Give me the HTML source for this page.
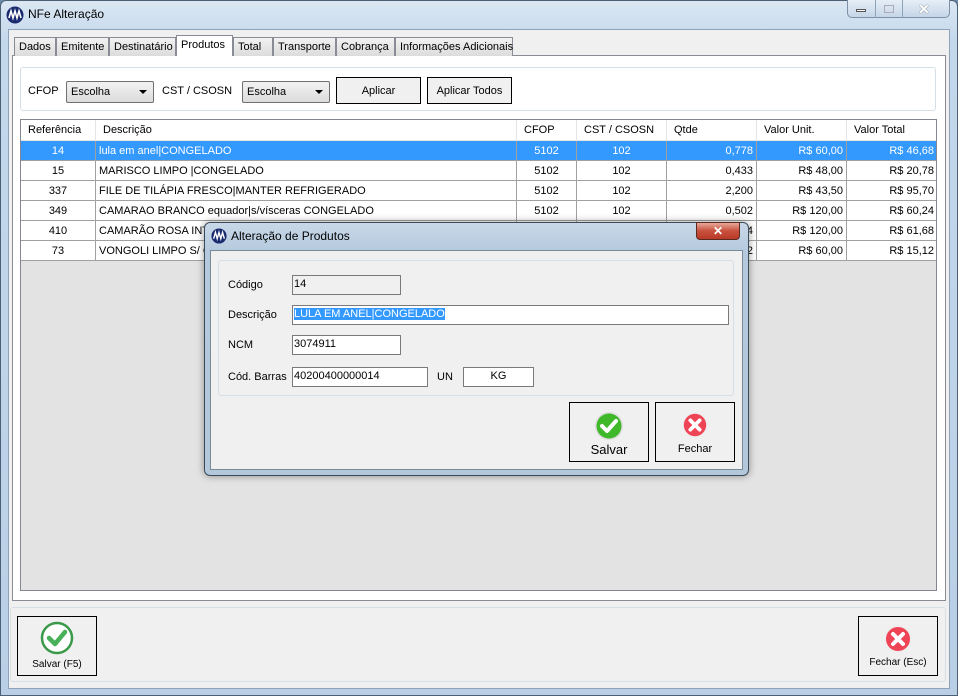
<!DOCTYPE html>
<html><head><meta charset="utf-8"><style>
*{box-sizing:border-box;margin:0;padding:0}
body{width:958px;height:696px;overflow:hidden;background:#6d8bad;font-family:"Liberation Sans",sans-serif;font-size:11px;color:#000;position:relative}
.a{position:absolute}
.frame{left:0;top:0;width:958px;height:696px;background:linear-gradient(#dbe7f3,#c4d8ec 40px,#b9cfe5);border:1px solid #4d5f73;border-radius:6px 6px 0 0}
.client{left:8px;top:29px;width:942px;height:660px;background:#f0f0f0;border:1px solid #8ea3b9}
.tab{top:37px;height:19px;border:1px solid #898c95;border-bottom:none;background:linear-gradient(#f2f2f2,#dcdcdc);padding:3px 4px 0;white-space:nowrap}
.tab.sel{top:35px;height:21px;background:#fff;z-index:2;padding-top:3px}
.panel{left:12px;top:55px;width:934px;height:546px;border:1px solid #898c95;background:#fff}
.grp{border:1px solid #d5dfe5;border-radius:3px;background:#f0f0f0}
.combo{height:22px;border:1px solid #707070;background:linear-gradient(#f2f2f2,#dcdcdc);border-radius:2px;padding:4px 4px;font-size:11px}
.combo:after{content:"";position:absolute;right:6px;top:8px;border:4px solid transparent;border-top:4px solid #000}
.btn{border:1px solid #000;background:#f0f0f0;text-align:center}
.grid{left:20px;top:119px;width:917px;height:472px;background:#e3e3e3;border:1px solid #828790;overflow:hidden}
table{border-collapse:collapse;position:absolute;left:-1px;top:-1px;table-layout:fixed}
td,th{height:20px;border:1px solid #a0a0a0;font-weight:normal;padding:0 3px;white-space:nowrap;overflow:hidden;font-size:11px}
th{height:21px;background:#fff;border-color:#e5e5e5;text-align:left;padding-left:7px}
td{background:#fff}
tr.s td{background:#3399ff;color:#fff}
.c{text-align:center}.r{text-align:right}
.dlg{left:204px;top:222px;width:545px;height:254px;background:linear-gradient(#c8d8e8,#b4c9de 30px,#b4c8dc);border:1px solid #3c4a58;border-radius:6px;box-shadow:0 0 8px rgba(0,0,0,.4)}
.inp{height:20px;border:1px solid #7a7a7a;background:#fff;padding:2px 1px;font-size:11px}
</style></head><body>
<div class="a frame"></div>
<svg class="a" style="left:6px;top:6px" width="18" height="18" viewBox="0 0 18 18"><circle cx="9" cy="9" r="8.5" fill="#1a2a6e"/><path d="M3 12 L5 5 L7 12 L9 5 L11 12 L13 5 L15 12" stroke="#fff" stroke-width="1.6" fill="none"/></svg>
<div class="a" style="left:28px;top:7px;font-size:12px">NFe Alteração</div>
<div class="a" style="left:847px;top:0;width:103px;height:18px;border:1px solid #7d90a6;border-top:none;border-radius:0 0 5px 5px;background:linear-gradient(#e6eef7,#c5d6e8)"></div>
<div class="a" style="left:875px;top:0;width:1px;height:18px;background:#8ea2b8"></div>
<div class="a" style="left:902px;top:0;width:1px;height:18px;background:#8ea2b8"></div>
<div class="a" style="left:856px;top:9px;width:10px;height:3px;border:1px solid #555;background:#fff"></div>
<div class="a" style="left:884px;top:5px;width:10px;height:8px;border:1px solid #aab;"></div>
<div class="a" style="left:918px;top:1px;font-size:14px;font-weight:bold;color:#fff;text-shadow:0 0 1px #333">✕</div>
<div class="a client"></div>

<div class="a panel"></div>
<div class="a tab" style="left:14px;width:42px">Dados</div>
<div class="a tab" style="left:56px;width:53px">Emitente</div>
<div class="a tab" style="left:109px;width:67px">Destinatário</div>
<div class="a tab sel" style="left:176px;width:57px">Produtos</div>
<div class="a tab" style="left:233px;width:40px">Total</div>
<div class="a tab" style="left:273px;width:63px">Transporte</div>
<div class="a tab" style="left:336px;width:59px">Cobrança</div>
<div class="a tab" style="left:395px;width:118px">Informações Adicionais</div>

<div class="a grp" style="left:20px;top:67px;width:916px;height:44px;background:#fff"></div>
<div class="a" style="left:28px;top:85px">CFOP</div>
<div class="a combo" style="left:66px;top:81px;width:88px">Escolha</div>
<div class="a" style="left:162px;top:85px">CST / CSOSN</div>
<div class="a combo" style="left:242px;top:81px;width:88px">Escolha</div>
<div class="a btn" style="left:336px;top:77px;width:85px;height:27px;padding-top:7px">Aplicar</div>
<div class="a btn" style="left:427px;top:77px;width:85px;height:27px;padding-top:7px">Aplicar Todos</div>

<div class="a grid">
<table style="width:917px">
<colgroup><col style="width:75px"><col style="width:421px"><col style="width:60px"><col style="width:90px"><col style="width:90px"><col style="width:90px"><col style="width:91px"></colgroup>
<tr><th>Referência</th><th>Descrição</th><th>CFOP</th><th>CST / CSOSN</th><th>Qtde</th><th>Valor Unit.</th><th>Valor Total</th></tr>
<tr class="s"><td class="c">14</td><td>lula em anel|CONGELADO</td><td class="c">5102</td><td class="c">102</td><td class="r">0,778</td><td class="r">R$ 60,00</td><td class="r">R$ 46,68</td></tr>
<tr><td class="c">15</td><td>MARISCO LIMPO |CONGELADO</td><td class="c">5102</td><td class="c">102</td><td class="r">0,433</td><td class="r">R$ 48,00</td><td class="r">R$ 20,78</td></tr>
<tr><td class="c">337</td><td>FILE DE TILÁPIA FRESCO|MANTER REFRIGERADO</td><td class="c">5102</td><td class="c">102</td><td class="r">2,200</td><td class="r">R$ 43,50</td><td class="r">R$ 95,70</td></tr>
<tr><td class="c">349</td><td>CAMARAO BRANCO equador|s/vísceras CONGELADO</td><td class="c">5102</td><td class="c">102</td><td class="r">0,502</td><td class="r">R$ 120,00</td><td class="r">R$ 60,24</td></tr>
<tr><td class="c">410</td><td>CAMARÃO ROSA INTEIRO</td><td class="c">5102</td><td class="c">102</td><td class="r">0,514</td><td class="r">R$ 120,00</td><td class="r">R$ 61,68</td></tr>
<tr><td class="c">73</td><td>VONGOLI LIMPO S/ CONCHA</td><td class="c">5102</td><td class="c">102</td><td class="r">0,252</td><td class="r">R$ 60,00</td><td class="r">R$ 15,12</td></tr>
</table></div>

<div class="a grp" style="left:10px;top:607px;width:936px;height:75px"></div>
<div class="a btn" style="left:17px;top:616px;width:80px;height:60px"></div>
<svg class="a" style="left:40px;top:621px" width="34" height="34" viewBox="0 0 34 34"><circle cx="17" cy="17" r="15" fill="#fff" stroke="#3a9a4a" stroke-width="2.5"/><path d="M9 17 L15 23 L25 11" stroke="#48b058" stroke-width="4.5" fill="none" stroke-linecap="round" stroke-linejoin="round"/></svg>
<div class="a" style="left:17px;top:659px;width:80px;text-align:center;font-size:10px">Salvar (F5)</div>
<div class="a btn" style="left:858px;top:616px;width:80px;height:60px"></div>
<svg class="a" style="left:883px;top:624px" width="30" height="30" viewBox="0 0 30 30"><circle cx="15" cy="15" r="14" fill="#eee"/><circle cx="15" cy="15" r="12" fill="#ee4456"/><path d="M10 10 L20 20 M20 10 L10 20" stroke="#fff" stroke-width="4" stroke-linecap="round"/></svg>
<div class="a" style="left:858px;top:657px;width:80px;text-align:center;font-size:10px">Fechar (Esc)</div>

<div class="a dlg"></div>
<svg class="a" style="left:211px;top:228px" width="16" height="16" viewBox="0 0 18 18"><circle cx="9" cy="9" r="8.5" fill="#1a2a6e"/><path d="M3 12 L5 5 L7 12 L9 5 L11 12 L13 5 L15 12" stroke="#fff" stroke-width="1.6" fill="none"/></svg>
<div class="a" style="left:231px;top:229px;font-size:12px">Alteração de Produtos</div>
<div class="a" style="left:696px;top:222px;width:44px;height:18px;background:linear-gradient(#e8a89a,#c8503c 50%,#b83a28);border:1px solid #5a2a20;border-radius:0 0 4px 4px;color:#fff;text-align:center;font-weight:bold;font-size:12px;padding-top:1px">✕</div>
<div class="a" style="left:210px;top:250px;width:533px;height:220px;background:#f0f0f0;border:1px solid #7b8a99"></div>
<div class="a grp" style="left:218px;top:260px;width:516px;height:136px"></div>
<div class="a" style="left:228px;top:279px">Código</div>
<div class="a inp" style="left:292px;top:275px;width:109px;background:#f0f0f0">14</div>
<div class="a" style="left:228px;top:309px">Descrição</div>
<div class="a inp" style="left:292px;top:305px;width:437px"><span style="background:#3399ff;color:#fff">LULA EM ANEL|CONGELADO</span></div>
<div class="a" style="left:228px;top:339px">NCM</div>
<div class="a inp" style="left:292px;top:335px;width:109px">3074911</div>
<div class="a" style="left:228px;top:371px">Cód. Barras</div>
<div class="a inp" style="left:292px;top:367px;width:136px">40200400000014</div>
<div class="a" style="left:437px;top:371px">UN</div>
<div class="a inp" style="left:463px;top:367px;width:71px;text-align:center">KG</div>
<div class="a btn" style="left:569px;top:402px;width:80px;height:60px"></div>
<svg class="a" style="left:594px;top:411px" width="30" height="30" viewBox="0 0 30 30"><circle cx="15" cy="15" r="14" fill="#ddd"/><circle cx="15" cy="15" r="12.5" fill="#3fb82a"/><path d="M8 15 L13 20 L22 10" stroke="#fff" stroke-width="4" fill="none" stroke-linecap="round" stroke-linejoin="round"/></svg>
<div class="a" style="left:569px;top:442px;width:80px;text-align:center;font-size:13px">Salvar</div>
<div class="a btn" style="left:655px;top:402px;width:80px;height:60px"></div>
<svg class="a" style="left:681px;top:411px" width="28" height="28" viewBox="0 0 30 30"><circle cx="15" cy="15" r="14" fill="#eee"/><circle cx="15" cy="15" r="12" fill="#ee4456"/><path d="M10 10 L20 20 M20 10 L10 20" stroke="#fff" stroke-width="4" stroke-linecap="round"/></svg>
<div class="a" style="left:655px;top:443px;width:80px;text-align:center;font-size:11px">Fechar</div>
</body></html>
